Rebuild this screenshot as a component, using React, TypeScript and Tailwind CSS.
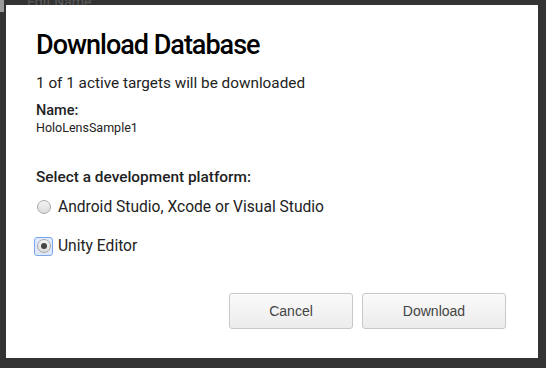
import { useState } from "react"

const platforms = ["Android Studio, Xcode or Visual Studio", "Unity Editor"]

const App = () => {
    const [platform, setPlatform] = useState(1)
    return (
        <div className="relative w-[546px] h-[368px] bg-[#333333] overflow-hidden" style={{ fontFamily: "Roboto, 'Noto Sans', sans-serif" }}>
            {/* page behind the modal */}
            <div className="absolute left-0 top-0 w-[4px] h-[12px] bg-[#9a9a9a]" />
            <div className="absolute left-[27px] top-[-6px] text-[14px] leading-[16px] text-[#5a5a5a]">Edit Name</div>

            <div className="absolute left-[6px] top-[5px] w-[532px] h-[353px] bg-white px-[30px] pt-[24px]">
                <h1 className="text-[27px] leading-[32px] font-medium text-black tracking-[-1px]">Download Database</h1>
                <p className="mt-[12px] text-[15.3px] leading-[20px] text-[#222]">1 of 1 active targets will be downloaded</p>

                <div className="mt-[9px]">
                    <div className="text-[14.5px] leading-[18px] font-medium text-[#222]">Name:</div>
                    <div className="text-[12.5px] leading-[15px] text-[#222]">HoloLensSample1</div>
                </div>

                <div className="mt-[33px] text-[15.4px] leading-[18px] font-medium text-[#222]">Select a development platform:</div>

                <div className="mt-[11px] flex flex-col gap-[19px]">
                    {platforms.map((p, i) => {
                        const checked = platform === i
                        return (
                            <label key={p} className="flex items-center gap-[6px] cursor-pointer" onClick={() => setPlatform(i)}>
                                <span className={`-ml-[1px] w-[17px] h-[17px] flex items-center justify-center ${checked ? "outline outline-[1.5px] outline-[#7aa7ee] rounded-[2px] bg-[#dfe9fb]" : ""}`}>
                                    <span className="w-[14px] h-[14px] rounded-full border border-[#a9a9a9] bg-gradient-to-b from-[#f3f3f3] to-[#dcdcdc] flex items-center justify-center">
                                        {checked && <span className="w-[6px] h-[6px] rounded-full bg-[#444]" />}
                                    </span>
                                </span>
                                <span className="text-[15.6px] leading-[20px] text-[#222]">{p}</span>
                            </label>
                        )
                    })}
                </div>

                <div className="absolute right-[32px] top-[288px] flex gap-[9px]" style={{ fontFamily: "'Liberation Sans', Arial, sans-serif" }}>
                    <button type="button" className="w-[124px] h-[36px] rounded-[3px] border border-[#c8c8c8] bg-gradient-to-b from-[#fafafa] to-[#ececec] text-[14px] text-[#444]">
                        Cancel
                    </button>
                    <button type="button" className="w-[144px] h-[36px] rounded-[3px] border border-[#c8c8c8] bg-gradient-to-b from-[#fafafa] to-[#ececec] text-[14px] text-[#444]">
                        Download
                    </button>
                </div>
            </div>
        </div>
    )
}

export default App
